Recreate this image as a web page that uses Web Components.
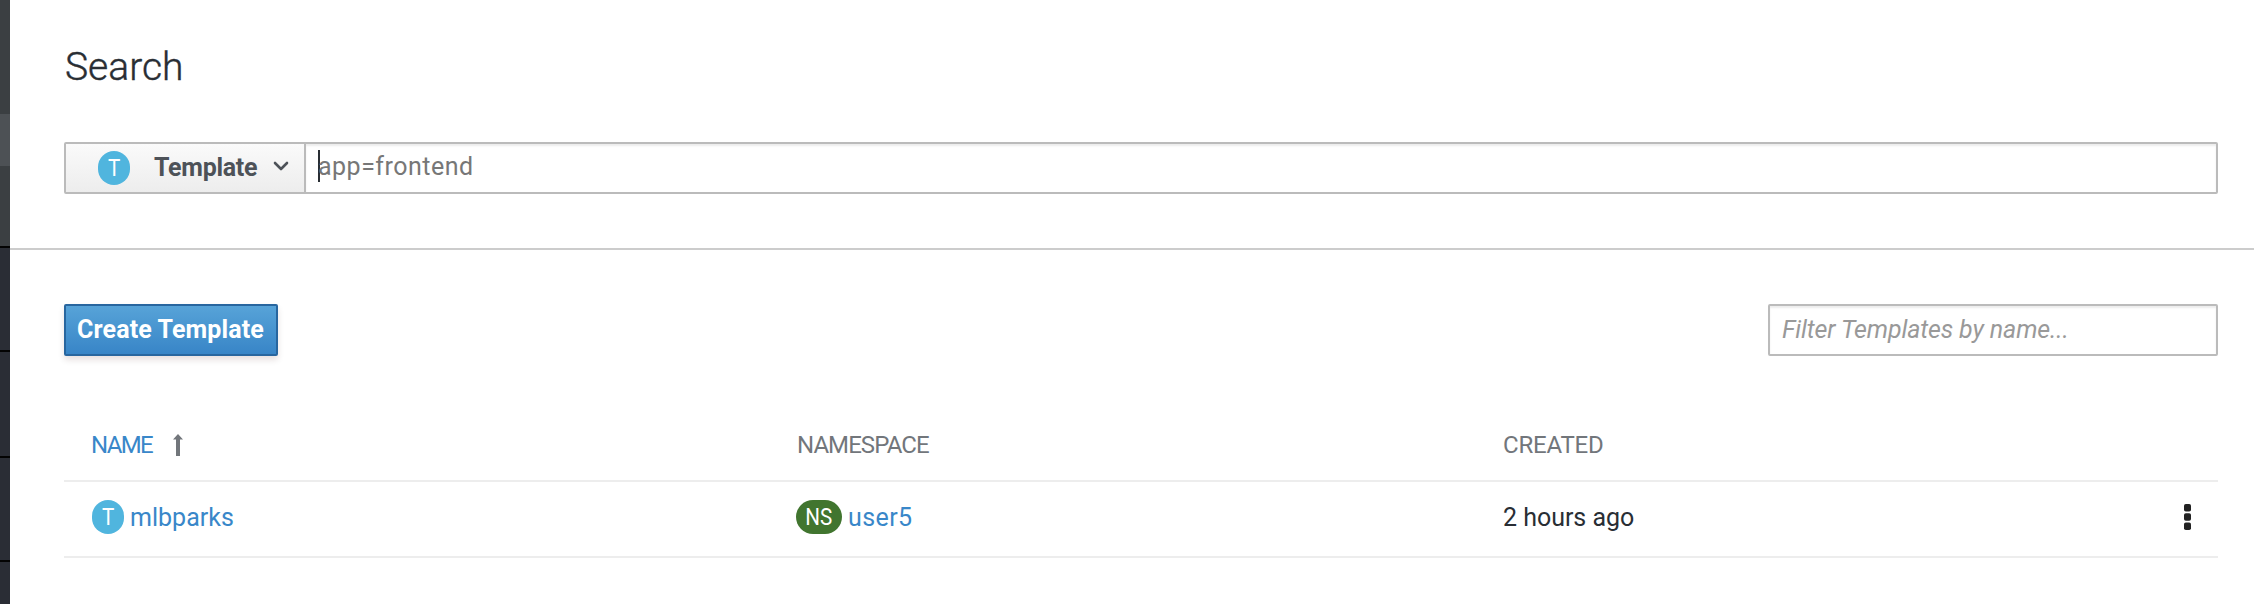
<!DOCTYPE html>
<html lang="en">
<head>
<meta charset="utf-8">
<title>Search</title>
<style>
html,body{margin:0;height:100%}
body{font-family:Roboto,"Liberation Sans",sans-serif;font-size:25px;color:#292e34;background:#fff;overflow:hidden}
</style>
</head>
<body>
<console-page></console-page>
<script>
const define = (name, html, ready) => {
  const t = document.createElement('template');
  t.innerHTML = html;
  customElements.define(name, class extends HTMLElement {
    constructor() { super(); this.attachShadow({mode: 'open'}).append(t.content.cloneNode(true)); }
    connectedCallback() { if (ready) ready(this); }
  });
};

// A single-line label tracked so that its glyphs span the given width.
define('text-run', `<style>:host{display:block;white-space:pre;flex:none;line-height:34px}</style><slot></slot>`, el => {
  const cs = getComputedStyle(el), text = el.textContent, want = +el.getAttribute('span');
  const ctx = document.createElement('canvas').getContext('2d');
  ctx.font = `${cs.fontStyle} ${cs.fontWeight} ${cs.fontSize} ${cs.fontFamily}`;
  const m = ctx.measureText(text), ink = m.actualBoundingBoxLeft + m.actualBoundingBoxRight;
  if (text.length > 1) el.style.letterSpacing = (want - ink) / (text.length - 1) + 'px';
  el.style.width = want + 'px';
  el.style.textIndent = m.actualBoundingBoxLeft + 'px';
});

define('resource-badge', `<style>
:host{display:flex;flex:none;box-sizing:border-box;width:var(--w,32px);height:34px;border-radius:17px;
background:var(--bg,#50b5de);color:#fff;align-items:center;justify-content:center;font-size:24px;font-weight:400;line-height:34px}
span{display:block;transform:scaleX(.86)}
</style><span><slot></slot></span>`);

define('side-strip', `<style>
:host{display:flex;flex-direction:column;width:10px;flex:none;background:#292e34}
i{display:block;flex:none;box-sizing:border-box}
.top{height:114px;background:#3b3f42}.active{height:52px;background:#4d5155}
.low{height:82px;background:#3b3f42;border-bottom:2px solid #030303}
.item{background:#2a2d35;border-bottom:2px solid #030303}
.last{background:#2a2d35;flex:1}
</style><i class="top"></i><i class="active"></i><i class="low"></i>
<i class="item" style="height:104px"></i><i class="item" style="height:106px"></i><i class="item" style="height:104px"></i><i class="last"></i>`);

define('search-bar', `<style>
:host{display:flex;box-sizing:border-box;height:52px;border:2px solid #bbb;border-radius:2px}
.kind{display:flex;align-items:center;width:238px;box-sizing:border-box;padding-left:32px;border-right:0;
background:linear-gradient(#fafafa,#ededed);font-weight:700;color:#4d5258}
.kind text-run{margin-left:24px}
svg{margin:-4px 0 0 16px}
.field{display:flex;flex:1;align-items:center;border-left:2px solid #bbb;padding:0 0 4px 12px;box-shadow:inset 0 2px 2px rgba(3,3,3,.075);color:#777}
.caret{width:2px;height:32px;background:#292e34}
.field text-run{margin:1px 0 0 -1px}
</style>
<div class="kind"><resource-badge>T</resource-badge><text-run span="103">Template</text-run>
<svg width="16" height="10" viewBox="0 0 16 10" fill="none" stroke="#4d5258" stroke-width="2.6" stroke-linecap="round" stroke-linejoin="round"><path d="M2 2l6 6 6-6"/></svg></div>
<div class="field"><span class="caret"></span><text-run span="153">app=frontend</text-run></div>`);

define('primary-button', `<style>
:host{display:flex;align-items:center;box-sizing:border-box;width:214px;height:52px;padding-left:12px;border:2px solid #28669f;border-radius:2px;
background:linear-gradient(#57a3d8,#3885c7);color:#fff;font-weight:700;box-shadow:0 4px 6px rgba(60,0,0,.12)}
</style><slot></slot>`);

define('filter-field', `<style>
:host{display:flex;align-items:center;box-sizing:border-box;width:450px;height:52px;padding-left:12px;border:2px solid #bbb;border-radius:2px;
box-shadow:inset 0 2px 2px rgba(3,3,3,.075);color:#999;font-style:italic}
</style><slot></slot>`);

define('template-table', `<style>
:host{display:block}
.row{display:grid;grid-template-columns:704px 708px 1fr auto;align-items:center;box-sizing:border-box;border-bottom:2px solid #ededed;padding-left:28px}
.head{height:76px;padding-top:4px;color:#72767b;font-size:24px}
.body{height:76px;padding-bottom:4px}
.cell{display:flex;align-items:center}
.link{color:#3987c9}
.body text-run{margin-top:1px}
.more{padding-right:27px}
svg{display:block}
</style>
<div class="row head">
<div class="cell link"><text-run span="61">NAME</text-run><svg style="margin:0 0 0 20px" width="10" height="22" viewBox="0 0 10 22" fill="#72767b"><path d="M5 0L10 5.5H7V22H3V5.5H0z"/></svg></div>
<div class="cell" style="padding-left:2px"><text-run span="131">NAMESPACE</text-run></div>
<div class="cell"><text-run span="99">CREATED</text-run></div>
</div>
<div class="row body">
<div class="cell link"><resource-badge>T</resource-badge><text-run span="102" style="margin-left:7px">mlbparks</text-run></div>
<div class="cell link"><resource-badge style="--w:46px;--bg:#41752f">NS</resource-badge><text-run span="63" style="margin-left:7px">user5</text-run></div>
<div class="cell"><text-run span="130">2 hours ago</text-run></div>
<div class="more"><svg width="7" height="26" viewBox="0 0 7 26" fill="#222"><rect width="7" height="7.6" rx="1.8"/><rect y="9.2" width="7" height="7.6" rx="1.8"/><rect y="18.4" width="7" height="7.6" rx="1.8"/></svg></div>
</div>`);

define('console-page', `<style>
:host{display:flex;height:604px}
main{flex:1;min-width:0}
header{box-sizing:border-box;height:250px;padding:47px 36px 0 54px;border-bottom:2px solid #ccc}
h1{margin:0 0 55px;height:40px;font-size:39px;font-weight:300;padding-left:2px;-webkit-text-stroke:.4px #292e34}
h1 text-run{line-height:40px}
section{padding:54px 36px 0 54px}
.tools{display:flex;justify-content:space-between;margin-bottom:50px}
</style>
<side-strip></side-strip>
<main><header><h1><text-run span="115">Search</text-run></h1><search-bar></search-bar></header>
<section><div class="tools"><primary-button><text-run span="186">Create Template</text-run></primary-button>
<filter-field><text-run span="285">Filter Templates by name...</text-run></filter-field></div>
<template-table></template-table></section></main>`);
</script>
</body>
</html>
